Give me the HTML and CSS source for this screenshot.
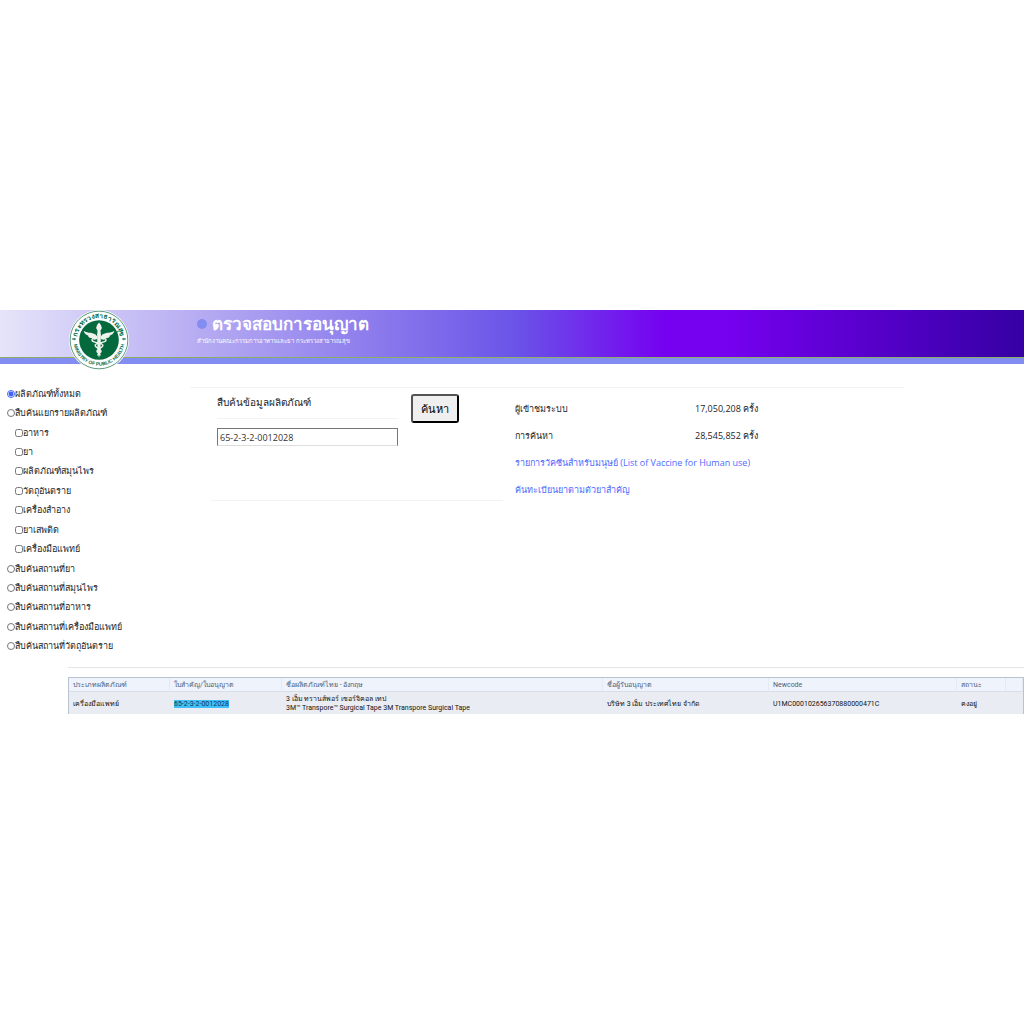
FILE: index.html
```html
<!DOCTYPE html>
<html lang="th">

<head>
    <meta charset="UTF-8">
    <meta name="viewport" content="width=device-width, initial-scale=1.0">
    <title>ตรวจสอบการอนุญาต</title>
    <link rel="stylesheet" href="styles.css">
</head>

<body>
    <header class="header">
        <svg class="logo" viewBox="0 0 62 62" role="img" aria-label="Ministry of Public Health">
            <defs>
                <path id="arcTop" d="M8.5 31 a22.5 22.5 0 0 1 45 0" />
                <path id="arcBottom" d="M4.5 31 a26.5 26.5 0 0 0 53 0" />
            </defs>
            <circle cx="31" cy="31" r="31" fill="#fff" />
            <circle cx="31" cy="31" r="29.800" fill="none" stroke="#2b7d55" stroke-width=".8" />
            <circle cx="31" cy="31" r="20.5" fill="#04693c" />
            <text class="logo-th"><textPath href="#arcTop" startOffset="50%">กระทรวงสาธารณสุข</textPath></text>
            <text class="logo-en"><textPath href="#arcBottom" startOffset="50%">MINISTRY OF PUBLIC HEALTH</textPath></text>
            <path d="M3 30l3-.8l1 .8l-1 .8zM59 30l-3-.8l-1 .8l1 .8z" fill="#04693c" stroke="#04693c" stroke-width=".4" />
            <!-- wings -->
            <path d="M29 27 C25 22 20 25 15 21.500 C16 25 18 26 20 26.500 C19.500 28 22 29 23.500 29 C24 31 27 31 29 30z" fill="#eef2ec" />
            <path d="M33 27 C37 22 42 25 47 21.500 C46 25 44 26 42 26.500 C42.500 28 40 29 38.500 29 C38 31 35 31 33 30z" fill="#eef2ec" />
            <!-- torch and snakes -->
            <path d="M31 13l2 2.500l1 3l-1.500 3l.500 4l-.5 18l-1.500 6l-1.500-6l-.5-18l.500-4l-1.500-3l1-3z" fill="#eef2ec" />
            <path d="M24 30c-2 5 12 3 11 7c-1 3-7 3-6 6c1 2 4 2 3 4M38 30c2 5-12 3-11 7c1 3 7 3 6 6c-1 2-4 2-3 4" fill="none" stroke="#eef2ec" stroke-width="1.500" />
        </svg>
        <div class="title">
            <h1><span class="dot"></span>ตรวจสอบการอนุญาต</h1>
            <p>สำนักงานคณะกรรมการอาหารและยา กระทรวงสาธารณสุข</p>
        </div>
    </header>

    <main class="main">
        <form class="filter">
            <label><input type="radio" name="type" checked>ผลิตภัณฑ์ทั้งหมด</label>
            <label><input type="radio" name="type">สืบค้นแยกรายผลิตภัณฑ์</label>
            <label class="sub"><input type="checkbox">อาหาร</label>
            <label class="sub"><input type="checkbox">ยา</label>
            <label class="sub"><input type="checkbox">ผลิตภัณฑ์สมุนไพร</label>
            <label class="sub"><input type="checkbox">วัตถุอันตราย</label>
            <label class="sub"><input type="checkbox">เครื่องสำอาง</label>
            <label class="sub"><input type="checkbox">ยาเสพติด</label>
            <label class="sub"><input type="checkbox">เครื่องมือแพทย์</label>
            <label><input type="radio" name="type">สืบค้นสถานที่ยา</label>
            <label><input type="radio" name="type">สืบค้นสถานที่สมุนไพร</label>
            <label><input type="radio" name="type">สืบค้นสถานที่อาหาร</label>
            <label><input type="radio" name="type">สืบค้นสถานที่เครื่องมือแพทย์</label>
            <label><input type="radio" name="type">สืบค้นสถานที่วัตถุอันตราย</label>
        </form>

        <div class="content">
            <form class="search">
                <div class="search-box">
                    <label for="keyword">สืบค้นข้อมูลผลิตภัณฑ์</label>
                    <input type="text" id="keyword" value="65-2-3-2-0012028">
                </div>
                <button type="button">ค้นหา</button>
            </form>
            <div class="stat">
                <div class="stat-row"><span>ผู้เข้าชมระบบ</span><span>17,050,208 ครั้ง</span></div>
                <div class="stat-row"><span>การค้นหา</span><span>28,545,852 ครั้ง</span></div>
                <a href="javascript:;">รายการวัคซีนสำหรับมนุษย์ (List of Vaccine for Human use)</a>
                <a href="javascript:;">ค้นทะเบียนยาตามตัวยาสำคัญ</a>
            </div>
        </div>
    </main>

    <section class="result">
        <table>
            <thead>
                <tr>
                    <th class="c-type">ประเภทผลิตภัณฑ์</th>
                    <th class="c-no">ใบสำคัญ/ใบอนุญาต</th>
                    <th class="c-name">ชื่อผลิตภัณฑ์ไทย - อังกฤษ</th>
                    <th class="c-owner">ชื่อผู้รับอนุญาต</th>
                    <th class="c-code">Newcode</th>
                    <th class="c-status">สถานะ</th>
                    <th class="c-end"></th>
                </tr>
            </thead>
            <tbody>
                <tr>
                    <td>เครื่องมือแพทย์</td>
                    <td><mark>65-2-3-2-0012028</mark></td>
                    <td>3 เอ็ม ทรานส์พอร์ เซอร์จิคอล เทป<br>3M™ Transpore™ Surgical Tape 3M Transpore Surgical Tape</td>
                    <td>บริษัท 3 เอ็ม ประเทศไทย จำกัด</td>
                    <td>U1MC000102656370880000471C</td>
                    <td>คงอยู่</td>
                    <td></td>
                </tr>
            </tbody>
        </table>
    </section>
</body>

</html>
```
FILE: styles.css
```css
* {
    margin: 0;
    padding: 0;
    box-sizing: border-box;
}

body {
    padding-top: 310px;
    font-family: "Open Sans", "Noto Sans", sans-serif;
    font-size: 9px;
    color: #212529;
    background-color: #fff;
}

a {
    text-decoration: none;
    color: #4c6bff;
}

.header {
    display: flex;
    height: 54px;
    padding-left: 68px;
    background: linear-gradient(to right, #e6e4fa 0%, #b5aaf2 20%, #6a55e8 50%, #7600f0 65%, #7600f0 71%, #3500a3 100%);
    border-bottom: 6px solid #838cf1;
    box-shadow: inset 0 -1px #8cae62;
}

.logo {
    flex: none;
    width: 62px;
    height: 60px;
}

.logo text {
    fill: #04693c;
    font-weight: bold;
    text-anchor: middle;
}

.logo-th {
    font-size: 7px;
}

.logo-en {
    font-size: 5px;
    font-family: "Liberation Sans", sans-serif;
}

.title {
    padding: 2px 0 0 67px;
    color: #fff;
}

.title h1 {
    display: flex;
    align-items: center;
    font-size: 17px;
    line-height: 24px;
    font-weight: 600;
}

.title p {
    font-size: 6px;
    line-height: 10px;
}

.dot {
    width: 10px;
    height: 10px;
    margin-right: 5px;
    border-radius: 50%;
    background-color: #838cf1;
}

.main {
    display: flex;
    padding-top: 20px;
}

.filter {
    display: flex;
    flex-direction: column;
    flex: none;
    width: 190px;
    height: 272px;
    padding-left: 7px;
}

.filter label {
    display: flex;
    flex: 1;
    align-items: center;
}

.filter .sub {
    padding-left: 8px;
}

.filter input {
    width: 8px;
    height: 8px;
    accent-color: #3f62ff;
}

.content {
    display: flex;
    flex: 1;
    align-items: flex-start;
    margin: 3px 120px 0 0;
    border-top: 1px solid #f3f3f3;
}

.search {
    display: flex;
    justify-content: space-between;
    width: 292px;
    height: 113px;
    margin-left: 21px;
    padding: 6px 44px 0 6px;
    border-bottom: 1px solid #f3f3f3;
}

.search-box {
    width: 181px;
}

.search-box label {
    display: block;
    height: 25px;
    margin-bottom: 9px;
    line-height: 16px;
    border-bottom: 1px solid #f3f3f3;
    font-size: 10px;
}

.search-box input {
    display: block;
    width: 100%;
    height: 18px;
    padding-left: 2px;
    border: 1px solid #767676;
    border-bottom-color: #ddd;
    font-family: inherit;
    font-size: 9px;
    color: #333;
}

.search button {
    width: 48px;
    height: 29px;
    border: 2px outset #000;
    border-radius: 3px;
    background-color: #efefef;
    font-family: inherit;
    font-size: 11px;
    color: #000;
}

.stat {
    display: flex;
    flex-direction: column;
    padding: 7px 0 0 12px;
    line-height: 27px;
}

.stat-row {
    display: grid;
    grid-template-columns: 180px 80px;
}

.result {
    margin-left: 68px;
    padding-top: 9px;
    margin-top: 11px;
    border-top: 1px solid #e6e6e6;
}

.result table {
    width: 100%;
    table-layout: fixed;
    border-collapse: separate;
    border-spacing: 0;
    border: 1px solid #b8c2d0;
    border-bottom: none;
    font-family: Roboto, "Noto Sans", sans-serif;
    font-size: 7px;
    line-height: 9px;
}

.result th {
    height: 14px;
    padding: 2px 0 0 4px;
    text-align: left;
    font-weight: normal;
    color: #4c607a;
    background-color: #eff3fc;
    border-right: 1px solid #e4e9f2;
    border-bottom: 1px solid #d9dee6;
}

.result td {
    height: 22px;
    padding: 3px 0 1px 4px;
    background-color: #e9edf3;
    color: #111;
}

.result mark {
    background-color: #3fc0f8;
    color: #16324a;
}

.c-type {
    width: 101px;
}

.c-no {
    width: 112px;
}

.c-name {
    width: 321px;
}

.c-owner {
    width: 166px;
}

.c-code {
    width: 188px;
}

.c-status {
    width: 49px;
}
```
